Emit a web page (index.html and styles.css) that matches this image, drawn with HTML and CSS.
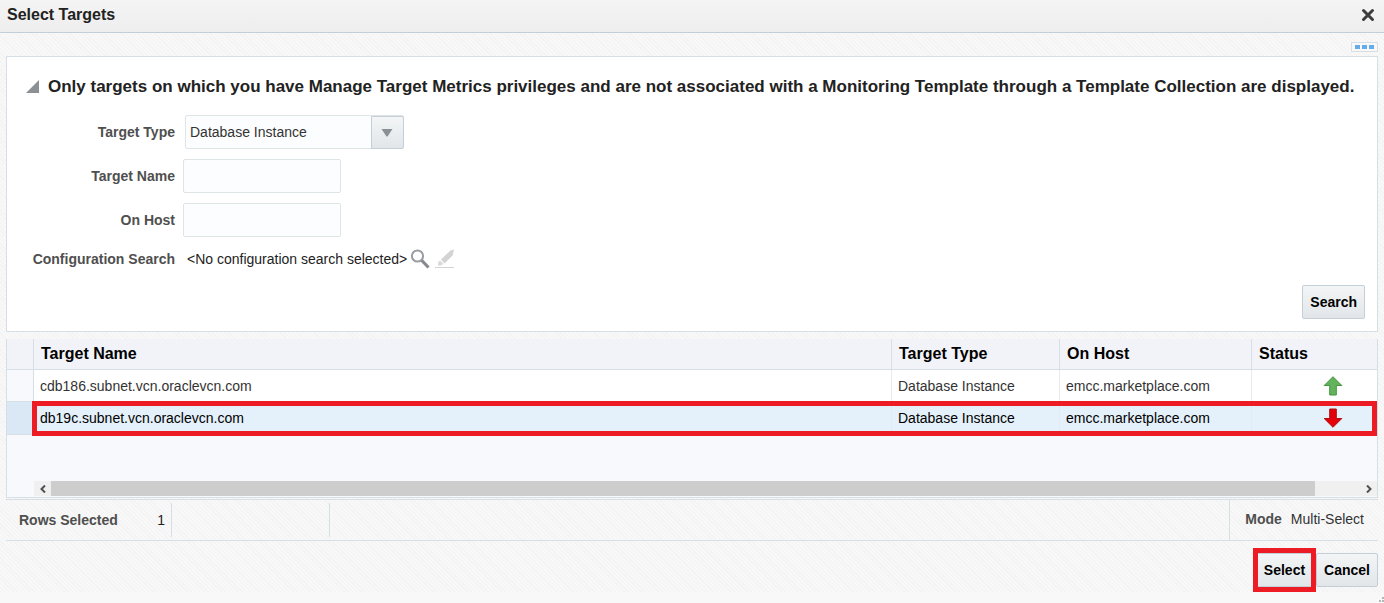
FILE: index.html
```html
<!DOCTYPE html>
<html lang="en">
<head>
<meta charset="utf-8">
<title>Select Targets</title>
<link rel="stylesheet" href="styles.css">
</head>
<body>
<div class="dialog">
  <header class="titlebar">
    <h1 class="title">Select Targets</h1>
    <button class="close" type="button" aria-label="Close">
      <svg width="14" height="14" viewBox="0 0 14 14"><path d="M2.5 2.5 11.5 11.5M11.5 2.5 2.5 11.5" stroke="#3c3c3c" stroke-width="3" stroke-linecap="round"/></svg>
    </button>
  </header>
  <main class="content">
    <div class="toolbar">
      <button class="more" type="button" aria-label="More"><span class="dash"></span><span class="dash"></span><span class="dash"></span></button>
    </div>
    <form class="panel">
      <div class="panel-head">
        <button class="disclose" type="button" aria-label="Collapse search">
          <svg width="14" height="14" viewBox="0 0 14 14"><path d="M13 0V13H0Z" fill="#8b9095"/></svg>
        </button>
        <h2 class="panel-title">Only targets on which you have Manage Target Metrics privileges and are not associated with a Monitoring Template through a Template Collection are displayed.</h2>
      </div>
      <div class="fields">
        <label class="label" for="type">Target Type</label>
        <div class="combo">
          <select class="combo-box" id="type"><option>Database Instance</option></select>
          <span class="combo-arrow"><svg width="12" height="9" viewBox="0 0 12 9"><path d="M.5 1H11.5L6.500 8.500H5.500Z" fill="#8b9095"/></svg></span>
        </div>
        <label class="label" for="name">Target Name</label>
        <input class="text" id="name" type="text">
        <label class="label" for="host">On Host</label>
        <input class="text" id="host" type="text">
        <span class="label">Configuration Search</span>
        <div class="config">
          <span class="config-value">&lt;No configuration search selected&gt;</span>
          <button class="icon" type="button" aria-label="Find configuration search">
            <svg width="20" height="20" viewBox="0 0 20 20"><circle cx="7.500" cy="7" r="5.600" fill="#fff" stroke="#999da1" stroke-width="2"/><path d="M11.800 11.500 18.500 18.500" stroke="#85898d" stroke-width="3.200"/></svg>
          </button>
          <button class="icon icon-edit" type="button" aria-label="Edit configuration search" disabled>
            <svg width="20" height="20" viewBox="0 0 20 20"><path d="M19 .5 15.500 1.500 6 10.500 9.500 14.500 17.500 6.500Z" fill="#d3d3d3"/><path d="M5 11.500 3 13.500V16.500H6L8.500 15Z" fill="#dadada"/><path d="M0 18.500H19" stroke="#d3d3d3"/></svg>
          </button>
        </div>
      </div>
      <div class="panel-actions"><button class="button" type="button">Search</button></div>
    </form>
    <section class="results">
      <table class="grid">
        <colgroup><col class="col-mark"><col><col class="col-type"><col class="col-host"><col class="col-status"></colgroup>
        <thead><tr><td class="mark"></td><th>Target Name</th><th>Target Type</th><th>On Host</th><th>Status</th></tr></thead>
        <tbody>
          <tr><td class="mark"></td><td>cdb186.subnet.vcn.oraclevcn.com</td><td>Database Instance</td><td>emcc.marketplace.com</td>
            <td class="status"><svg width="20" height="20" viewBox="0 0 20 20" role="img" aria-label="Up"><path d="M10 .7 18.800 9.500H13.300V19H6.700V9.500H1.200Z" fill="#63b35d" stroke="#469442"/></svg></td></tr>
          <tr class="selected"><td class="mark"></td><td>db19c.subnet.vcn.oraclevcn.com</td><td>Database Instance</td><td>emcc.marketplace.com</td>
            <td class="status"><svg width="20" height="20" viewBox="0 0 20 20" role="img" aria-label="Down"><path d="M10 19.300 18.800 10.500H13.300V1H6.700V10.500H1.200Z" fill="#e6000a" stroke="#a91318"/></svg></td></tr>
        </tbody>
      </table>
      <div class="scrollbar">
        <button class="scroll-step" type="button" aria-label="Scroll left"><svg width="8" height="8" viewBox="0 0 8 8"><path d="M6 .5 2.500 4 6 7.500" fill="none" stroke="#505050" stroke-width="2"/></svg></button>
        <div class="track"><div class="thumb"></div></div>
        <button class="scroll-step" type="button" aria-label="Scroll right"><svg width="8" height="8" viewBox="0 0 8 8"><path d="M2 .5 5.500 4 2 7.500" fill="none" stroke="#505050" stroke-width="2"/></svg></button>
      </div>
    </section>
    <section class="summary">
      <div class="rows"><span class="label">Rows Selected</span><span class="count">1</span></div>
      <div class="spacer"></div>
      <div class="mode"><span class="label">Mode</span><span>Multi-Select</span></div>
    </section>
    <footer class="actions">
      <span class="highlight"><button class="button" type="button">Select</button></span>
      <button class="button" type="button">Cancel</button>
    </footer>
  </main>
  <div class="bottom"><svg width="6" height="6" viewBox="0 0 6 6"><path d="M4 0h2v2H4zM1 3h2v2H1zM4 3h2v2H4z" fill="#b5b5b5"/></svg></div>
</div>
</body>
</html>
```

FILE: styles.css
```css
* { box-sizing: border-box; }
body { margin: 0; font: 14px/20px "Liberation Sans", Arial, sans-serif; color: #333; background: #f8f8f8; }
button { font: inherit; padding: 0; border: 0; background: none; }
svg { display: block; }
.dialog { display: flex; flex-direction: column; min-height: 100vh; }
.titlebar { display: flex; align-items: center; justify-content: space-between; height: 33px; padding: 0 9px 3px 7px; border-bottom: 1px solid #c4ced7; background: linear-gradient(#f4f4f4, #eee); }
.title { margin: 0; font-size: 16px; font-weight: bold; color: #222; }
.content { padding: 0 6px; background: repeating-linear-gradient(45deg, #f3f3f3 0 1px, #f8f8f8 1px 3px); }
.toolbar { display: flex; justify-content: flex-end; padding: 9px 0 4px; }
.more { display: flex; align-items: center; justify-content: center; gap: 2px; width: 27px; height: 10px; border: 1px solid #d6dfe6; background: #f8f8f8; }
.dash { width: 5px; height: 4px; background: #64ade9; }
.panel { padding: 20px 12px 12px 19px; border: 1px solid #d6dfe6; background: #fff; }
.panel-head { display: flex; align-items: center; gap: 8px; }
.panel-title { margin: 0; font-size: 17px; color: #222; white-space: nowrap; }
.fields { display: grid; grid-template-columns: 149px 1fr; column-gap: 8px; row-gap: 10px; align-items: center; margin-top: 18px; }
.label { font-size: 14px; font-weight: bold; color: #4f4f4f; }
.fields .label { text-align: right; white-space: nowrap; }
.combo { position: relative; width: 219px; height: 34px; margin-left: 2px; }
.combo-box { width: 100%; height: 34px; padding: 0 40px 0 4px; font: inherit; color: #333; appearance: none; border: 1px solid #dfe4e7; border-radius: 2px; background: #fcfdfe; }
.combo-arrow { position: absolute; top: 1px; right: 0; bottom: 0; display: flex; align-items: center; justify-content: center; width: 33px; border: 1px solid #c4ced7; border-radius: 0 2px 2px 0; background: linear-gradient(#f3f5f6, #e2e6e9); pointer-events: none; }
.combo-arrow svg { margin-right: 2px; }
.text { width: 158px; height: 34px; border: 1px solid #dfe4e7; border-radius: 2px; background: #fcfdfe; }
.config { display: flex; align-items: center; height: 24px; padding-left: 4px; color: #222; }
.icon { margin-left: 3px; }
.icon-edit { margin-left: 5px; }
.panel-actions { display: flex; justify-content: flex-end; margin-top: 14px; }
.button { height: 34px; padding: 0 7px; font-weight: bold; font-size: 14px; color: #000; border: 1px solid #c4ced7; border-radius: 2px; background: linear-gradient(#f3f5f6, #e2e6e9); }
.results { margin-top: 7px; height: 159px; display: flex; flex-direction: column; border: 1px solid #d6dfe6; border-top: 0; background: #f8f9fd; }
.grid { width: 100%; table-layout: fixed; border-collapse: separate; border-spacing: 0; }
.col-mark { width: 27px; }
.col-type { width: 168px; }
.col-host { width: 192px; }
.col-status { width: 125px; }
.grid th { height: 31px; padding: 0 7px; font-size: 16px; color: #000; text-align: left; background: #f2f3f8; border-right: 1px solid #d6dfe6; border-bottom: 1px solid #d6dfe6; }
.grid th:last-child, .grid td:last-child { border-right: 0; }
.grid td { height: 32px; padding: 0 6px; background: #fff; border-right: 1px solid #e9ecee; }
.grid .mark { padding: 0; background: #f8f9fd; border-right: 1px solid #d6dfe6; border-bottom: 1px solid #d6dfe6; }
.grid thead .mark { height: 31px; background: #f2f3f8; }
.grid .selected td { height: 33px; color: #000; background: #e4f0fa; border-color: #e0ecf6; border-bottom: 1px solid #d6dfe6; }
.grid .selected .mark { background: #dae8f5; }
.selected { position: relative; }
.selected .status::after { content: ""; position: absolute; inset: -1px 0 -1px 25px; border: 5px solid #ed1c24; }
.status svg { margin-left: 65px; }
.scrollbar { display: flex; height: 15px; margin: auto 0 1px 27px; background: #f0f0f0; }
.scroll-step { display: flex; align-items: center; justify-content: center; width: 17px; }
.track { flex: 1; }
.thumb { width: 96.6%; height: 100%; background: #cdcdcd; }
.summary { display: flex; justify-content: space-between; margin-top: 1px; border-top: 1px solid #d6dfe6; border-bottom: 1px solid #d6dfe6; }
.rows { display: flex; align-items: center; justify-content: space-between; width: 166px; margin: 3px 0; padding: 0 6px 0 13px; border-right: 1px solid #d6dfe6; }
.count { color: #222; }
.spacer { width: 158px; margin: 3px auto 3px 0; border-right: 1px solid #d6dfe6; }
.mode { display: flex; gap: 9px; padding: 9px 14px 11px 15px; border-left: 1px solid #d6dfe6; }
.actions { display: flex; justify-content: flex-end; gap: 3px; padding: 12px 0 5px; }
.highlight { position: relative; display: flex; }
.highlight::after { content: ""; position: absolute; inset: -5px -3px; border: 5px solid #ed1c24; }
.bottom { display: flex; flex: 1; align-items: flex-end; justify-content: flex-end; }
```
